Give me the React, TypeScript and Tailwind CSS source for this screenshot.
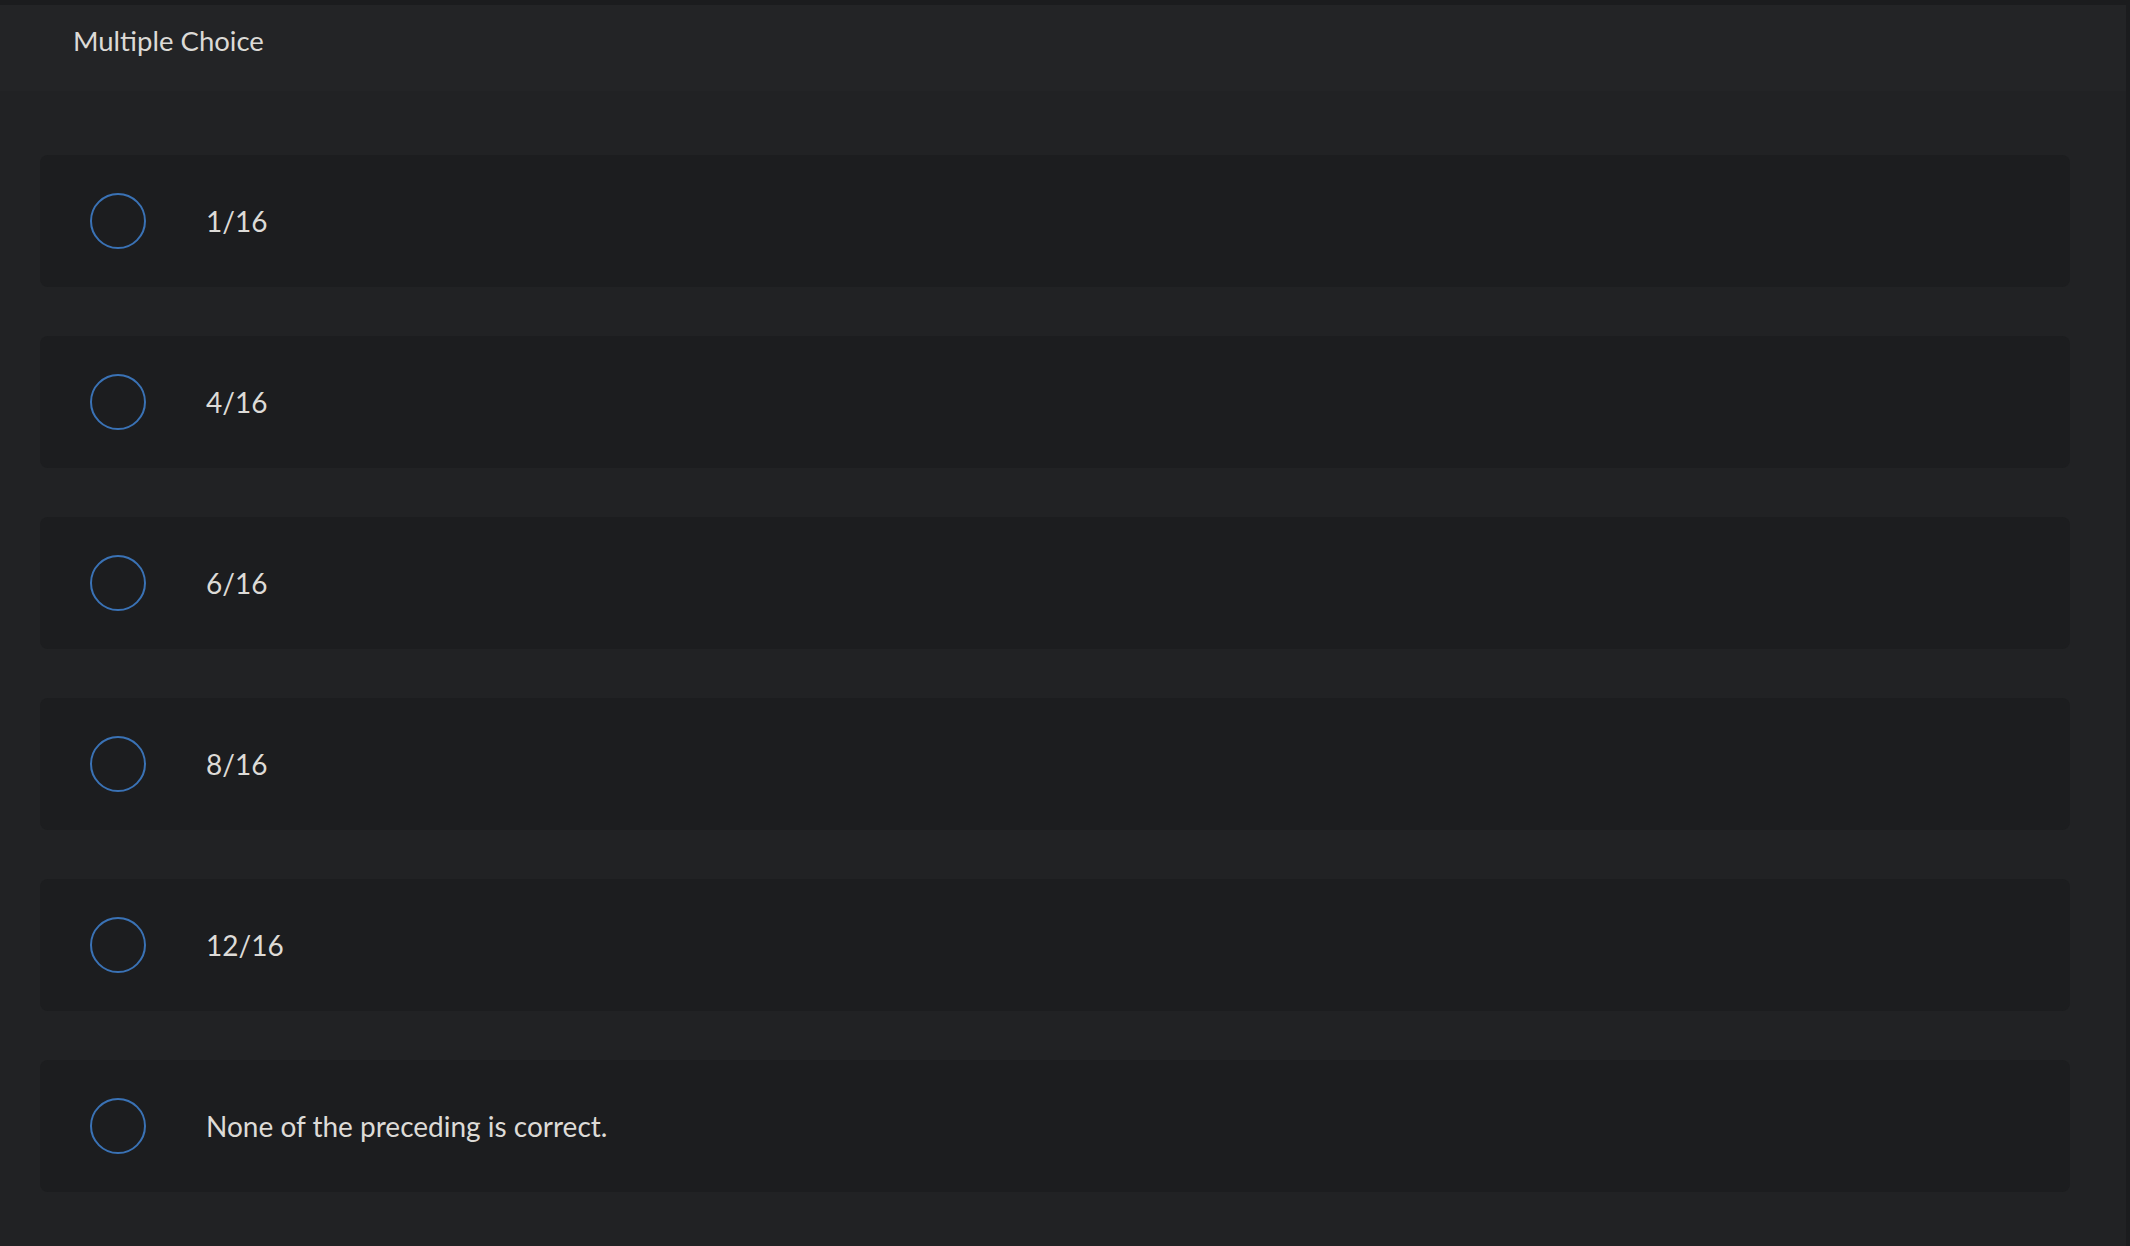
const options = ["1/16", "4/16", "6/16", "8/16", "12/16", "None of the preceding is correct."];

function Option({label}: {label: string}) {
    return (
        <div className="flex h-[132px] items-center rounded-lg bg-[#1c1d1f] pl-[50px]">
            <div className="h-[56px] w-[56px] shrink-0 rounded-full border-2 border-[#3a72b5]"></div>
            <span className="ml-[60px] text-[28px] text-[#dddbd7]">{label}</span>
        </div>
    );
}

export default function App() {
    return (
        <div className="flex h-[1246px] w-full bg-[#1b1c1e] font-['Lato',sans-serif]">
            <div className="mt-[5px] flex flex-1 flex-col bg-[#212224]">
                <div className="flex h-[86px] items-start bg-[#232426] pl-[73px] pt-[20px]">
                    <h1 className="text-[27.5px] leading-[32px] text-[#dcdad6]">Multiple Choice</h1>
                </div>
                <div className="flex flex-col gap-[49px] pl-[40px] pr-[56px] pt-[64px]">
                    {options.map(o => <Option key={o} label={o}/>)}
                </div>
            </div>
            <div className="w-[4px] bg-[#1b1c1e]"></div>
        </div>
    );
}
